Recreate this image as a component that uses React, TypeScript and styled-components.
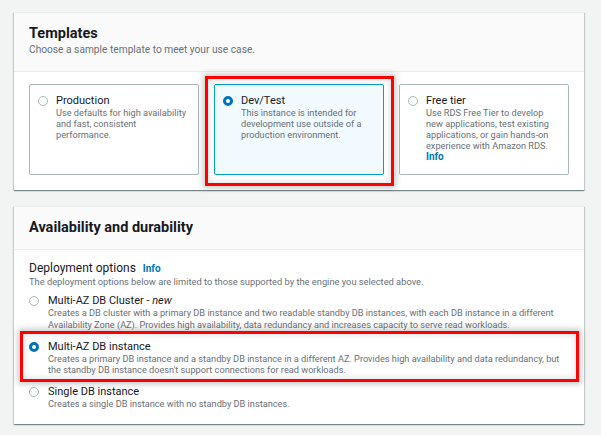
import React from "react";
import styled, { createGlobalStyle } from "styled-components";

const GlobalStyle = createGlobalStyle`
  html, body { margin: 0; padding: 0; }
  body {
    background: #f2f3f3;
    font-family: Roboto, "Liberation Sans", Arial, sans-serif;
    color: #16191f;
    -webkit-font-smoothing: antialiased;
  }
  * { box-sizing: border-box; }
`;

const Page = styled.div`
  display: flex;
  flex-direction: column;
  gap: 16px;
  padding: 12px 17px 11px 14px;
  width: 601px;
`;

const Panel = styled.section`
  background: #ffffff;
  border-top: 1px solid #eaeded;
  box-shadow: 0 1px 1px 0 rgba(0, 28, 36, 0.3), 1px 1px 1px 0 rgba(0, 28, 36, 0.15),
    -1px 1px 1px 0 rgba(0, 28, 36, 0.15);
`;

const PanelHeader = styled.header<{ $compact?: boolean }>`
  background: #fafafa;
  border-bottom: 1px solid #eaeded;
  padding: ${(p) => (p.$compact ? "12px 15px 13px" : "12px 15px 14px")};
`;

const PanelTitle = styled.h2`
  margin: 0;
  font-size: 14.5px;
  line-height: 17px;
  font-weight: 700;
  color: #16191f;
`;

const PanelSubtitle = styled.p`
  margin: 1px 0 0;
  font-size: 10.2px;
  line-height: 14px;
  color: #687078;
`;

const PanelBody = styled.div<{ $pad: string }>`
  padding: ${(p) => p.$pad};
`;

const TileGrid = styled.div`
  display: grid;
  grid-template-columns: repeat(3, 170px);
  column-gap: 15px;
`;

const Tile = styled.div<{ $selected?: boolean }>`
  position: relative;
  height: 91px;
  display: flex;
  align-items: flex-start;
  gap: 8px;
  padding: 9px 8px 0 8px;
  border: 1px solid ${(p) => (p.$selected ? "#00a1c9" : "#aab7b8")};
  border-radius: 2px;
  background: ${(p) => (p.$selected ? "#f1faff" : "#ffffff")};
`;

const Radio = styled.span<{ $checked?: boolean }>`
  flex: none;
  width: 10px;
  height: 10px;
  margin-top: 2px;
  border-radius: 50%;
  background: #ffffff;
  border: ${(p) => (p.$checked ? "3px solid #0073bb" : "1px solid #aab7b8")};
`;

const OptionText = styled.div`
  display: flex;
  flex-direction: column;
  min-width: 0;
`;

const OptionTitle = styled.div`
  font-size: 11px;
  line-height: 13px;
  color: #16191f;

  em {
    font-style: italic;
  }
`;

const OptionDesc = styled.div`
  font-size: 9.2px;
  line-height: 11px;
  color: #687078;
`;

const InfoLink = styled.span`
  font-size: 10px;
  font-weight: 700;
  color: #0073bb;
`;

const Highlight = styled.div<{ $t: number; $r: number; $b: number; $l: number }>`
  position: absolute;
  top: ${(p) => p.$t}px;
  right: ${(p) => p.$r}px;
  bottom: ${(p) => p.$b}px;
  left: ${(p) => p.$l}px;
  border: 3px solid #ff0000;
  box-shadow: 0 0 6px 2px rgba(0, 0, 0, 0.22), inset 0 0 6px 1px rgba(0, 0, 0, 0.12);
  pointer-events: none;
`;

const FieldLabel = styled.div`
  display: flex;
  align-items: baseline;
  gap: 7px;
  font-size: 12px;
  line-height: 14px;
  color: #16191f;
`;

const FieldDesc = styled.div`
  font-size: 9.3px;
  line-height: 12px;
  color: #687078;
`;

const OptionList = styled.div`
  display: flex;
  flex-direction: column;
  gap: 9.5px;
  margin-top: 6px;
`;

const OptionRow = styled.div`
  position: relative;
  display: flex;
  align-items: flex-start;
  gap: 9px;
`;

const OptionDescWide = styled(OptionDesc)`
  line-height: 11.5px;
`;

export default function App() {
  return (
    <>
      <GlobalStyle />
      <Page>
        <Panel>
          <PanelHeader>
            <PanelTitle>Templates</PanelTitle>
            <PanelSubtitle>Choose a sample template to meet your use case.</PanelSubtitle>
          </PanelHeader>
          <PanelBody $pad="12px 15px 15px">
            <TileGrid>
              <Tile>
                <Radio />
                <OptionText>
                  <OptionTitle>Production</OptionTitle>
                  <OptionDesc>
                    Use defaults for high availability
                    <br />
                    and fast, consistent
                    <br />
                    performance.
                  </OptionDesc>
                </OptionText>
              </Tile>
              <Tile $selected>
                <Radio $checked />
                <OptionText>
                  <OptionTitle>Dev/Test</OptionTitle>
                  <OptionDesc>
                    This instance is intended for
                    <br />
                    development use outside of a
                    <br />
                    production environment.
                  </OptionDesc>
                </OptionText>
                <Highlight $t={-9} $r={-11} $b={-12} $l={-10} />
              </Tile>
              <Tile>
                <Radio />
                <OptionText>
                  <OptionTitle>Free tier</OptionTitle>
                  <OptionDesc>
                    Use RDS Free Tier to develop
                    <br />
                    new applications, test existing
                    <br />
                    applications, or gain hands-on
                    <br />
                    experience with Amazon RDS.
                  </OptionDesc>
                  <OptionDesc>
                    <InfoLink>Info</InfoLink>
                  </OptionDesc>
                </OptionText>
              </Tile>
            </TileGrid>
          </PanelBody>
        </Panel>

        <Panel>
          <PanelHeader $compact>
            <PanelTitle>Availability and durability</PanelTitle>
          </PanelHeader>
          <PanelBody $pad="11px 15px 14px">
            <FieldLabel>
              Deployment options <InfoLink>Info</InfoLink>
            </FieldLabel>
            <FieldDesc>
              The deployment options below are limited to those supported by the engine you selected above.
            </FieldDesc>
            <OptionList>
              <OptionRow>
                <Radio />
                <OptionText>
                  <OptionTitle>
                    Multi-AZ DB Cluster - <em>new</em>
                  </OptionTitle>
                  <OptionDescWide>
                    Creates a DB cluster with a primary DB instance and two readable standby DB instances, with each DB
                    instance in a different
                    <br />
                    Availability Zone (AZ). Provides high availability, data redundancy and increases capacity to serve
                    read workloads.
                  </OptionDescWide>
                </OptionText>
              </OptionRow>
              <OptionRow>
                <Radio $checked />
                <OptionText>
                  <OptionTitle>Multi-AZ DB instance</OptionTitle>
                  <OptionDescWide>
                    Creates a primary DB instance and a standby DB instance in a different AZ. Provides high availability
                    and data redundancy, but
                    <br />
                    the standby DB instance doesn't support connections for read workloads.
                  </OptionDescWide>
                </OptionText>
                <Highlight $t={-9} $r={-10} $b={-6} $l={-9} />
              </OptionRow>
              <OptionRow>
                <Radio />
                <OptionText>
                  <OptionTitle>Single DB instance</OptionTitle>
                  <OptionDescWide>Creates a single DB instance with no standby DB instances.</OptionDescWide>
                </OptionText>
              </OptionRow>
            </OptionList>
          </PanelBody>
        </Panel>
      </Page>
    </>
  );
}
